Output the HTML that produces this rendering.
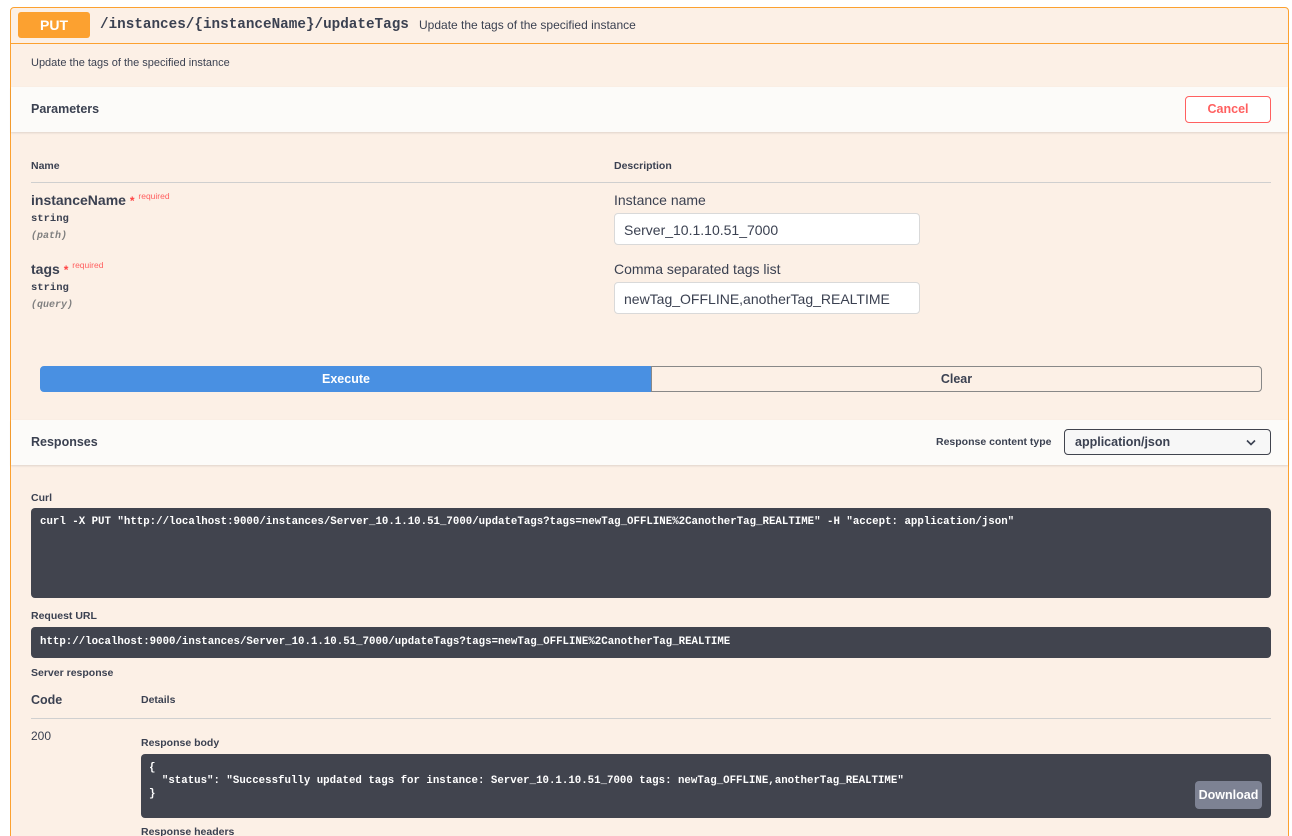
<!DOCTYPE html>
<html style="overflow:hidden;height:836px"><head><meta charset="utf-8"><style>
*{box-sizing:border-box;margin:0;padding:0}
body{width:1292px;height:836px;overflow:hidden;background:#fff;font-family:"Liberation Sans",sans-serif;color:#3b4151;position:relative}
.a{position:absolute}
.box{position:absolute;left:10px;top:7px;width:1279px;height:860px;border:1px solid #fca130;border-radius:4px;background:#fcf0e6}
.b{font-weight:bold}
.mono{font-family:"Liberation Mono",monospace}
.code{position:absolute;background:#41444e;border-radius:4px;color:#fff;font-family:"Liberation Mono",monospace;font-weight:bold;font-size:10.75px}
.inp{position:absolute;left:614px;width:306px;height:32px;background:#fff;border:1px solid #d9d9d9;border-radius:4px;font-size:14px;padding:8px 9px;color:#3b4151}
</style></head><body>
<div class="box"></div>
<div class="a" style="left:11px;top:43px;width:1277px;height:1px;background:#fca130"></div>
<div class="a b" style="left:18px;top:12px;width:72px;height:26px;background:#fca130;border-radius:3px;color:#fff;font-size:14px;text-align:center;line-height:26px">PUT</div>
<div class="a mono b" style="left:100px;top:16px;font-size:14.3px;line-height:18px">/instances/{instanceName}/updateTags</div>
<div class="a" style="left:419px;top:17px;font-size:12px;line-height:16px">Update the tags of the specified instance</div>
<div class="a" style="left:31px;top:56px;font-size:11px;line-height:14px">Update the tags of the specified instance</div>
<div class="a" style="left:11px;top:87px;width:1277px;height:45px;background:#fcfbf9;box-shadow:0 1px 2px rgba(0,0,0,.12)"></div>
<div class="a b" style="left:31px;top:102px;font-size:12.5px">Parameters</div>
<div class="a b" style="left:1185px;top:96px;width:86px;height:27px;border:1px solid #ff6060;border-radius:4px;color:#ff6060;font-size:12.5px;text-align:center;line-height:25px;background:#fff">Cancel</div>
<div class="a b" style="left:31px;top:160px;font-size:10.5px">Name</div>
<div class="a b" style="left:614px;top:160px;font-size:10.5px">Description</div>
<div class="a" style="left:31px;top:182px;width:1240px;height:1px;background:#cfcfcf"></div>
<div class="a b" style="left:31px;top:192px;font-size:14px">instanceName <span style="color:#ff4444;font-size:12px">*</span> <span style="color:#ff6060;font-size:8.5px;position:relative;top:-6px;font-weight:normal">required</span></div>
<div class="a mono b" style="left:31px;top:213px;font-size:10.5px">string</div>
<div class="a mono b" style="left:31px;top:231px;font-size:10px;font-style:italic;color:#808080">(path)</div>
<div class="a b" style="left:31px;top:261px;font-size:14px">tags <span style="color:#ff4444;font-size:12px">*</span> <span style="color:#ff6060;font-size:8.5px;position:relative;top:-6px;font-weight:normal">required</span></div>
<div class="a mono b" style="left:31px;top:282px;font-size:10.5px">string</div>
<div class="a mono b" style="left:31px;top:300px;font-size:10px;font-style:italic;color:#808080">(query)</div>
<div class="a" style="left:614px;top:192px;font-size:14px">Instance name</div>
<div class="inp" style="top:213px">Server_10.1.10.51_7000</div>
<div class="a" style="left:614px;top:261px;font-size:14px">Comma separated tags list</div>
<div class="inp" style="top:282px">newTag_OFFLINE,anotherTag_REALTIME</div>
<div class="a b" style="left:40px;top:366px;width:612px;height:26px;background:#4990e2;border:1px solid #4990e2;border-radius:4px 0 0 4px;color:#fff;font-size:12.5px;text-align:center;line-height:24px">Execute</div>
<div class="a b" style="left:651px;top:366px;width:611px;height:26px;border:1px solid #888;border-radius:0 4px 4px 0;font-size:12.5px;text-align:center;line-height:24px;background:transparent">Clear</div>
<div class="a" style="left:11px;top:420px;width:1277px;height:45px;background:#fcfbf9;box-shadow:0 1px 2px rgba(0,0,0,.12)"></div>
<div class="a b" style="left:31px;top:435px;font-size:12.5px">Responses</div>
<div class="a b" style="left:936px;top:436px;font-size:10.5px">Response content type</div>
<div class="a b" style="left:1064px;top:429px;width:207px;height:26px;border:1px solid #41444e;border-radius:4px;background:#f7f7f7;font-size:12.5px;padding:5px 10px">application/json<svg style="position:absolute;right:14px;top:9px" width="10" height="7" viewBox="0 0 10 7"><path d="M1 1.5l4 4 4-4" fill="none" stroke="#3b4151" stroke-width="1.6"/></svg></div>
<div class="a b" style="left:31px;top:492px;font-size:10.5px">Curl</div>
<div class="code" style="left:31px;top:508px;width:1240px;height:90px;padding:8px 9px">curl -X PUT "http://localhost:9000/instances/Server_10.1.10.51_7000/updateTags?tags=newTag_OFFLINE%2CanotherTag_REALTIME" -H "accept: application/json"</div>
<div class="a b" style="left:31px;top:610px;font-size:10.5px">Request URL</div>
<div class="code" style="left:31px;top:627px;width:1240px;height:31px;padding:9px 9px">http://localhost:9000/instances/Server_10.1.10.51_7000/updateTags?tags=newTag_OFFLINE%2CanotherTag_REALTIME</div>
<div class="a b" style="left:31px;top:667px;font-size:10.5px">Server response</div>
<div class="a b" style="left:31px;top:693px;font-size:12.5px">Code</div>
<div class="a b" style="left:141px;top:694px;font-size:10.5px">Details</div>
<div class="a" style="left:31px;top:718px;width:1240px;height:1px;background:#d0d0d0"></div>
<div class="a" style="left:31px;top:729px;font-size:12px">200</div>
<div class="a b" style="left:141px;top:737px;font-size:10.5px">Response body</div>
<div class="code" style="left:141px;top:754px;width:1130px;height:64px;padding:8px 8px;line-height:13px;white-space:pre">{
  "status": "Successfully updated tags for instance: Server_10.1.10.51_7000 tags: newTag_OFFLINE,anotherTag_REALTIME"
}</div>
<div class="a b" style="left:1195px;top:781px;width:67px;height:28px;background:#7d8293;border-radius:4px;color:#fff;font-size:12.5px;text-align:center;line-height:28px">Download</div>
<div class="a b" style="left:141px;top:826px;font-size:10.5px">Response headers</div>
</body></html>
